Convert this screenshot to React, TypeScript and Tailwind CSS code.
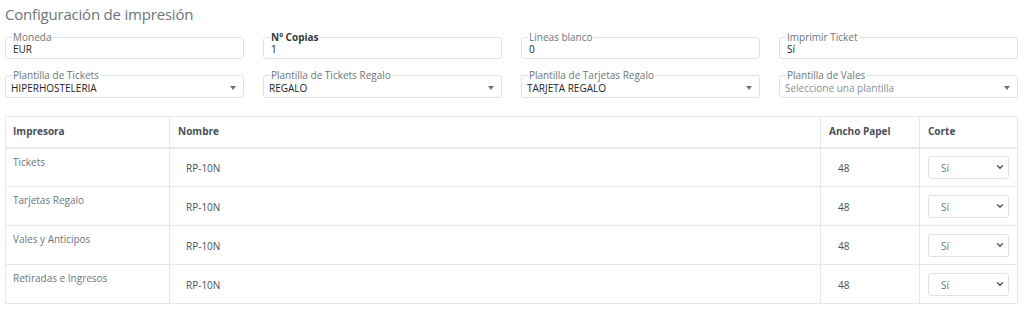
import { ChevronDown } from 'lucide-react'

const topFields = [
  { label: 'Moneda', value: 'EUR' },
  { label: 'Nº Copias', value: '1', bold: true },
  { label: 'Lineas blanco', value: '0' },
  { label: 'Imprimir Ticket', value: 'Sí' },
]

const templateFields = [
  { label: 'Plantilla de Tickets', value: 'HIPERHOSTELERIA' },
  { label: 'Plantilla de Tickets Regalo', value: 'REGALO' },
  { label: 'Plantilla de Tarjetas Regalo', value: 'TARJETA REGALO' },
  { label: 'Plantilla de Vales', value: 'Seleccione una plantilla', placeholder: true },
]

const printers = ['Tickets', 'Tarjetas Regalo', 'Vales y Anticipos', 'Retiradas e Ingresos']

function Field({ label, value, bold }: { label: string; value: string; bold?: boolean }) {
  return (
    <div className="relative h-[22px] rounded-[3px] border border-[#dee2e6] bg-white">
      <span
        className={`absolute -top-[6px] left-[6px] bg-white px-[1px] text-[10px] leading-[10px] ${
          bold ? 'font-bold text-[#343a40]' : 'text-[#6c757d]'
        }`}
      >
        {label}
      </span>
      <div className="pl-[7px] pt-[5px] text-[10px] leading-[12px] text-[#212529]">{value}</div>
    </div>
  )
}

function SelectField({ label, value, placeholder }: { label: string; value: string; placeholder?: boolean }) {
  return (
    <div className="relative flex h-[23px] items-center rounded-[3px] border border-[#dee2e6] bg-white">
      <span className="absolute -top-[6px] left-[6px] bg-white px-[1px] text-[10px] leading-[10px] text-[#6c757d]">
        {label}
      </span>
      <div
        className={`flex-1 pl-[5px] pt-[3px] text-[10px] leading-[12px] ${
          placeholder ? 'text-[#8a9096]' : 'text-[#212529]'
        }`}
      >
        {value}
      </div>
      <svg className="mr-[7px] mt-[2px]" width="6" height="4" viewBox="0 0 6 4">
        <path d="M0 0h6L3 4z" fill="#6c757d" />
      </svg>
    </div>
  )
}

export default function App() {
  return (
    <div className="h-[310px] w-[1024px] bg-white font-['Open_Sans',sans-serif]">
      <div className="pl-[5px] pr-[6px] pt-[5px]">
        <h2 className="text-[15px] font-medium leading-[18px] tracking-[-0.2px] text-[#6c757d]">
          Configuración de impresión
        </h2>

        <div className="mt-[14px] grid grid-cols-4 gap-x-[19px]">
          {topFields.map((f) => (
            <Field key={f.label} {...f} />
          ))}
        </div>

        <div className="mt-[16px] grid grid-cols-4 gap-x-[19px]">
          {templateFields.map((f) => (
            <SelectField key={f.label} {...f} />
          ))}
        </div>

        <table className="mt-[18px] w-full border-collapse border border-[#e6e9ec] text-[10px]">
          <thead>
            <tr className="h-[31px] border-b-2 border-[#e6e9ec] text-left font-bold text-[#495057]">
              <th className="w-[164px] border-r border-[#e6e9ec] pl-[7px]">Impresora</th>
              <th className="border-r border-[#e6e9ec] pl-[8px]">Nombre</th>
              <th className="w-[99px] border-r border-[#e6e9ec] pl-[8px]">Ancho Papel</th>
              <th className="w-[98px] pl-[8px]">Corte</th>
            </tr>
          </thead>
          <tbody>
            {printers.map((p) => (
              <tr key={p} className="h-[39px] border-b border-[#e6e9ec]">
                <td className="border-r border-[#e6e9ec] pl-[7px] pt-[6px] align-top text-[#6c757d]">{p}</td>
                <td className="border-r border-[#e6e9ec] pl-[16px] pt-[2px] text-[#495057]">RP-10N</td>
                <td className="border-r border-[#e6e9ec] pl-[17px] pt-[2px] text-[#495057]">48</td>
                <td className="pl-[8px]">
                  <div className="flex h-[23px] w-[81px] items-center justify-between rounded-[3px] border border-[#dee2e6] pl-[12px] pr-[3px] text-[#6c757d]">
                    <span className="pt-[2px]">Sí</span>
                    <ChevronDown size={10} strokeWidth={3} color="#495057" />
                  </div>
                </td>
              </tr>
            ))}
          </tbody>
        </table>
      </div>
    </div>
  )
}
